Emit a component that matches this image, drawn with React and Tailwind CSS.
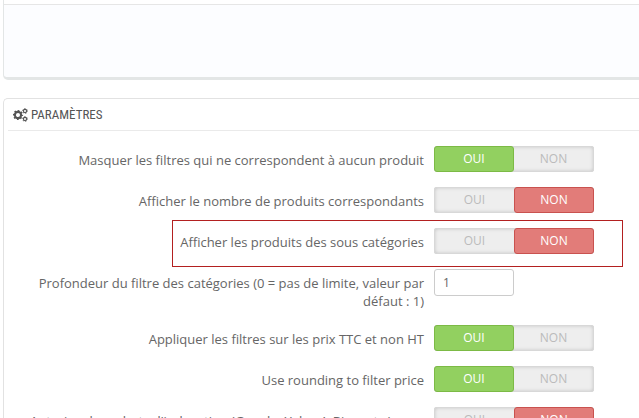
import React, { useState } from "react";

const settings = [
  { id: "hide", label: "Masquer les filtres qui ne correspondent à aucun produit", type: "switch", value: true },
  { id: "count", label: "Afficher le nombre de produits correspondants", type: "switch", value: false },
  { id: "subcategories", label: "Afficher les produits des sous catégories", type: "switch", value: false, highlight: true },
  { id: "depth", label: "Profondeur du filtre des catégories (0 = pas de limite, valeur par défaut : 1)", type: "text", value: "1" },
  { id: "tax", label: "Appliquer les filtres sur les prix TTC et non HT", type: "switch", value: true },
  { id: "rounding", label: "Use rounding to filter price", type: "switch", value: true },
  { id: "index", label: "Autoriser les robots d'indexation (Google, Yahoo!, Bing, etc.) pour", type: "switch", value: false },
];

// One large gear with two small ones on its right
const CogsIcon = () => (
  <svg viewBox="0 0 15 14" className="h-[14px] w-[15px]" fill="none" stroke="currentColor" aria-hidden="true">
    <circle cx="5" cy="7" r="3.1" strokeWidth="2.1" />
    <circle cx="5" cy="7" r="4.4" strokeWidth="1.4" strokeDasharray="1.728 1.728" strokeDashoffset="0.864" />
    <circle cx="12" cy="3" r="1.6" strokeWidth="1.1" />
    <circle cx="12" cy="3" r="2.4" strokeWidth="0.9" strokeDasharray="1.257 1.257" strokeDashoffset="0.628" />
    <circle cx="12" cy="11" r="1.6" strokeWidth="1.1" />
    <circle cx="12" cy="11" r="2.4" strokeWidth="0.9" strokeDasharray="1.257 1.257" strokeDashoffset="0.628" />
  </svg>
);

const Switch = ({ id, value, onChange }) => {
  const base = "h-[26px] w-20 border text-center text-xs leading-6";
  const off = "border-[#d8d8d8] text-[#bbb]";

  return (
    <div
      role="group"
      aria-labelledby={`${id}-label`}
      className="flex w-40 rounded-[3px] bg-[#eee] shadow-[inset_0_0_4px_rgba(0,0,0,0.25)]"
    >
      <button
        type="button"
        aria-pressed={value}
        onClick={() => onChange(true)}
        className={`${base} ${value ? "rounded-[3px] border-[#7cba45] bg-[#92d060] text-white" : `rounded-l-[3px] border-r-0 ${off}`}`}
      >
        OUI
      </button>
      <button
        type="button"
        aria-pressed={!value}
        onClick={() => onChange(false)}
        className={`${base} ${value ? `rounded-r-[3px] border-l-0 ${off}` : "rounded-[3px] border-[#c9524f] bg-[#e27c79] text-white"}`}
      >
        NON
      </button>
    </div>
  );
};

const SettingRow = ({ setting }) => {
  const [value, setValue] = useState(setting.value);
  const labelClass = "flex-1 pt-[5px] text-right text-[13px] leading-[18px] text-[#666]";

  return (
    <div className="relative flex gap-[10px]">
      {setting.type === "switch" ? (
        <span id={`${setting.id}-label`} className={labelClass}>{setting.label}</span>
      ) : (
        <label htmlFor={setting.id} className={labelClass}>{setting.label}</label>
      )}
      <div className="w-[205px]">
        {setting.type === "switch" ? (
          <Switch id={setting.id} value={value} onChange={setValue} />
        ) : (
          <input
            id={setting.id}
            type="text"
            value={value}
            onChange={(e) => setValue(e.target.value)}
            className="block h-[27px] w-20 rounded-[3px] border border-[#ccc] bg-white px-2 text-xs text-[#666]"
          />
        )}
      </div>
      {/* Red frame around the highlighted setting */}
      {setting.highlight && (
        <div className="pointer-events-none absolute -top-2 right-4 h-[47px] w-[451px] border border-[#b32020]" />
      )}
    </div>
  );
};

const App = () => {
  return (
    <main className="h-screen overflow-hidden bg-white pl-[3px] font-['Open_Sans',sans-serif]">
      <section className="rounded-bl-[5px] border-b-[3px] border-l border-[#e3e6e6] bg-[#fcfdff]">
        <div className="h-1 bg-white" />
        <div className="h-[73px] border-t border-[#e6e6e6]" />
      </section>

      <section className="mt-[18px] rounded-tl-[5px] border-t border-l border-[#e2e2e2] pl-1">
        <h2 className="flex h-8 items-center gap-[3px] border-b border-[#eaeaea] pl-[5px] text-[13px] font-normal text-[#555]">
          <CogsIcon />
          <span className="font-['Ubuntu_Condensed','Roboto_Condensed',sans-serif]">PARAMÈTRES</span>
        </h2>
        <form className="flex flex-col gap-[15px] pt-[15px] pl-5">
          {settings.map((setting) => (
            <SettingRow key={setting.id} setting={setting} />
          ))}
        </form>
      </section>
    </main>
  );
};

export default App;
